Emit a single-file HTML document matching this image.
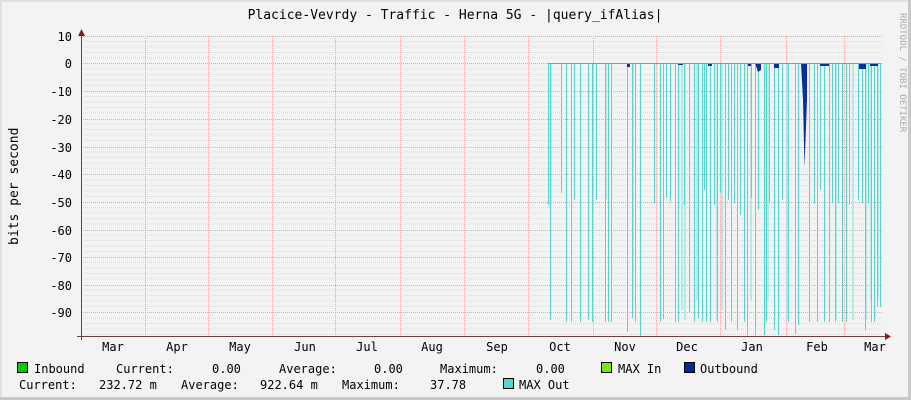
<!DOCTYPE html>
<html><head><meta charset="utf-8"><style>
html,body{margin:0;padding:0;width:911px;height:400px;overflow:hidden;background:#f3f3f3}
svg{display:block}
text{font-family:"DejaVu Sans Mono","Liberation Mono",monospace;font-size:12px;fill:#000}
</style></head><body>
<svg width="911" height="400" xmlns="http://www.w3.org/2000/svg">
<rect x="0" y="0" width="911" height="400" fill="#f3f3f3"/>
<rect x="0" y="0" width="911" height="2" fill="#e0e0e0"/>
<rect x="0" y="0" width="2" height="400" fill="#e0e0e0"/>
<rect x="908" y="0" width="3" height="400" fill="#c8c8c8"/>
<rect x="0" y="397" width="911" height="3" fill="#c8c8c8"/>
<text x="455" y="19" text-anchor="middle" style="font-size:13px">Placice-Vevrdy - Traffic - Herna 5G - |query_ifAlias|</text>
<text x="0" y="0" transform="translate(18,245) rotate(-90)" style="font-size:13px">bits per second</text>
<text x="0" y="0" transform="translate(900,13) rotate(90)" style="font-size:9px;fill:#aaa">RRDTOOL / TOBI OETIKER</text>
<g id="grid">
<path d="M81 41.5H883M81 47H883M81 52.5H883M81 58H883M81 69H883M81 74.5H883M81 80H883M81 85.5H883M81 96.5H883M81 102H883M81 107.5H883M81 113H883M81 124H883M81 129.5H883M81 135H883M81 140.5H883M81 152H883M81 157.5H883M81 163H883M81 168.5H883M81 180H883M81 185.5H883M81 191H883M81 196.5H883M81 207.5H883M81 213H883M81 218.5H883M81 224H883M81 235H883M81 240.5H883M81 246H883M81 251.5H883M81 262.5H883M81 268H883M81 273.5H883M81 279H883M81 290H883M81 295.5H883M81 301H883M81 306.5H883M81 318H883M81 323.5H883M81 329H883M81 334.5H883" stroke="#ddd" stroke-width="1" stroke-dasharray="1,1" fill="none"/>
<path d="M81 36.5H883M81 63.5H883M81 91.5H883M81 119.5H883M81 147.5H883M81 174.5H883M81 202.5H883M81 230.5H883M81 257.5H883M81 285.5H883M81 312.5H883M145.5 36V336M208.5 36V336M272.5 36V336M335.5 36V336M400.5 36V336M464.5 36V336M528.5 36V336M593.5 36V336M656.5 36V336M720.5 36V336M786.5 36V336M844.5 36V336" stroke="#f3a0a0" stroke-width="1" stroke-dasharray="1,1" fill="none"/>
</g>
<g stroke="#a8e6e4" stroke-width="2" fill="none" opacity="0.8">
<path d="M551 64V205M606 64V200M633 64V300M682 64V310M685 64V320M697 64V300M717 64V320M722 64V310M751 64V300M765 64V320M768 64V300M787 64V320M836 64V320M853 64V320M866 64V320M878 64V300M871 64V300"/>
</g>
<g stroke="#55d5d0" stroke-width="1" fill="none">
<path d="M548.5 63V205M550.5 63V320M561.5 63V193M566.5 63V322M571.5 63V322M574.5 63V200M580.5 63V322M588.5 63V320M592.5 63V322M596.5 63V200M605.5 63V322M608.5 63V322M611.5 63V322M627.5 63V332M632.5 63V318M635.5 63V322M640.5 63V336M654.5 63V203M660.5 63V322M663.5 63V319M666.5 63V198M670.5 63V202M675.5 63V322M678.5 63V322M684.5 63V205M689.5 63V312M694.5 63V322M698.5 63V318M702.5 63V322M704.5 63V190M706.5 63V322M710.5 63V322M714.5 63V205M717.5 63V322M720.5 63V193M725.5 63V330M728.5 63V200M731.5 63V322M734.5 63V203M737.5 63V330M740.5 63V215M744.5 63V322M747.5 63V335M751.5 63V198M755.5 63V335M758.5 63V210M764.5 63V335M766.5 63V322M769.5 63V203M774.5 63V330M778.5 63V335M782.5 63V200M788.5 63V322M795.5 63V334M798.5 63V325M809.5 63V322M814.5 63V203M817.5 63V322M820.5 63V190M824.5 63V322M829.5 63V322M832.5 63V203M835.5 63V322M838.5 63V203M842.5 63V322M846.5 63V322M849.5 63V205M858.5 63V200M862.5 63V203M865.5 63V330M868.5 63V203M871.5 63V322M874.5 63V322M877.5 63V307M880.5 63V307"/>
</g>
<g fill="#0a2f9a">
<path d="M801 63H807V100L804.5 167L803 100Z"/>
<path d="M755 63H761V70L758 72Z M627 63H630V67H627Z M708 63H712V66H708Z M748 63H751V66H748Z M820 63H829V66H820Z M859 63H866V69H859Z M870 63H878V66H870Z M678 63H683V65H678Z M774 63H779V68H774Z"/>
</g>
<path d="M548 63.5H880" stroke="#66cc00" stroke-width="1"/>
<path d="M81.5 32V340M77 336.5H890" stroke="#6b4040" stroke-width="1"/>
<path d="M78 36L81.5 29L85 36Z M885 333L891 336.5L885 340Z" fill="#8b1a1a"/>
<g text-anchor="end">
<text x="72" y="41">10</text><text x="72" y="68">0</text><text x="72" y="96">-10</text><text x="72" y="124">-20</text><text x="72" y="152">-30</text><text x="72" y="179">-40</text><text x="72" y="207">-50</text><text x="72" y="235">-60</text><text x="72" y="262">-70</text><text x="72" y="290">-80</text><text x="72" y="317">-90</text>
</g>
<g text-anchor="middle">
<text x="113" y="351">Mar</text><text x="177" y="351">Apr</text><text x="240" y="351">May</text><text x="305" y="351">Jun</text><text x="367" y="351">Jul</text><text x="432" y="351">Aug</text><text x="497" y="351">Sep</text><text x="560" y="351">Oct</text><text x="625" y="351">Nov</text><text x="687" y="351">Dec</text><text x="752" y="351">Jan</text><text x="817" y="351">Feb</text><text x="875" y="351">Mar</text>
</g>
<rect x="17.5" y="362.5" width="10" height="10" fill="#00cc00" stroke="#000"/>
<rect x="601.5" y="362.5" width="10" height="10" fill="#7ee600" stroke="#000"/>
<rect x="684.5" y="362.5" width="10" height="10" fill="#002a97" stroke="#000"/>
<rect x="503.5" y="378.5" width="10" height="10" fill="#55d5d0" stroke="#000"/>
<text x="34" y="373">Inbound</text>
<text x="116" y="373">Current:</text>
<text x="212" y="373">0.00</text>
<text x="279" y="373">Average:</text>
<text x="374" y="373">0.00</text>
<text x="440" y="373">Maximum:</text>
<text x="536" y="373">0.00</text>
<text x="618" y="373">MAX In</text>
<text x="700" y="373">Outbound</text>
<text x="19" y="389">Current:</text>
<text x="99" y="389">232.72 m</text>
<text x="181" y="389">Average:</text>
<text x="260" y="389">922.64 m</text>
<text x="342" y="389">Maximum:</text>
<text x="430" y="389">37.78</text>
<text x="519" y="389">MAX Out</text>
</svg>
</body></html>
